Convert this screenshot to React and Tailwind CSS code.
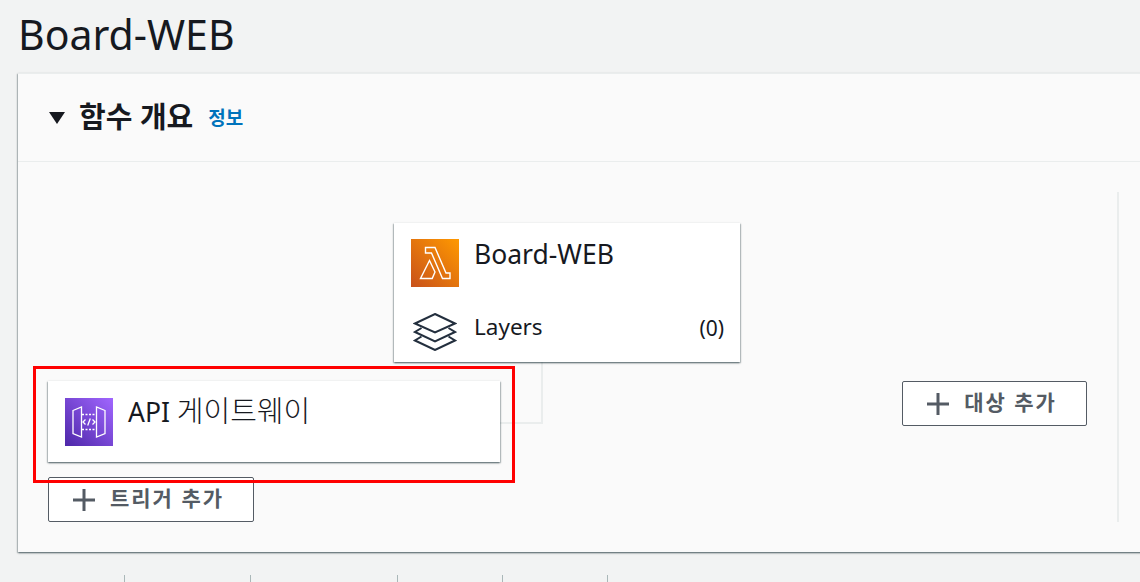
const fuente = { fontFamily: '"Noto Sans", "Noto Sans CJK KR", sans-serif' };

const sombra =
  "shadow-[0_1px_2px_0_rgba(0,28,36,0.5),1px_1px_1px_0_rgba(0,28,36,0.15),-1px_1px_1px_0_rgba(0,28,36,0.15)]";

function LambdaIcon() {
  return (
    <svg width="48" height="48" viewBox="0 0 48 48" className="shrink-0">
      <defs>
        <linearGradient id="naranja" x1="0" y1="1" x2="1" y2="0">
          <stop offset="0" stopColor="#c8511b" />
          <stop offset="1" stopColor="#ff9900" />
        </linearGradient>
      </defs>
      <rect width="48" height="48" fill="url(#naranja)" />
      <path
        d="M14.5 8.5h9.5l11 25.5h4v5.5h-7.5l-11-25.5h-6zM18.5 21.5l5.5 11.5-2.8 6.5H9.5z"
        fill="none"
        stroke="#fff"
        strokeWidth="1.4"
      />
    </svg>
  );
}

function ApiIcon() {
  return (
    <svg width="48" height="48" viewBox="0 0 48 48" className="shrink-0">
      <defs>
        <linearGradient id="morado" x1="0" y1="1" x2="1" y2="0">
          <stop offset="0" stopColor="#4d27a8" />
          <stop offset="1" stopColor="#a166ff" />
        </linearGradient>
      </defs>
      <rect width="48" height="48" fill="url(#morado)" />
      <path d="M8 12.5l8.5-3.5v30l-8.5-3.5zM40 12.5L31.5 9v30l8.5-3.5z" fill="none" stroke="#fff" strokeWidth="1.3" />
      <path d="M17 16.5h14M17 31.5h14" fill="none" stroke="#fff" strokeWidth="1.3" strokeDasharray="2 1.5" />
      <path d="M20.5 21.5L18 24l2.5 2.5M27.5 21.5L30 24l-2.5 2.5M25.3 20.5l-2.6 7" fill="none" stroke="#fff" strokeWidth="1.3" />
    </svg>
  );
}

function LayersIcon() {
  return (
    <svg width="44" height="38" viewBox="0 0 44 38" className="relative top-[6px] shrink-0" fill="none" stroke="#232f3e" strokeWidth="2">
      <path d="M22 1L42 10.5 22 19.5 2 10.5z" />
      <path d="M8.5 15L2 19l20 9.5L42 19l-6.5-4" />
      <path d="M8.5 23.5L2 27.5l20 9.5 20-9.5-6.5-4" />
    </svg>
  );
}

function PlusIcon() {
  return (
    <svg width="22" height="22" viewBox="0 0 22 22" className="shrink-0" fill="none" stroke="#545b64" strokeWidth="3">
      <path d="M0 11h22M11 0v22" />
    </svg>
  );
}

function BotonAgregar({ texto, className }) {
  return (
    <button
      className={`absolute flex h-[45px] items-center justify-center gap-[15px] rounded-[2px] border border-[#545b64] bg-white pr-[5px] text-[21px] font-bold tracking-[2px] text-[#545b64] ${className}`}
    >
      <PlusIcon />
      <span className="relative -top-px">{texto}</span>
    </button>
  );
}

export default function App() {
  return (
    <div className="relative h-[582px] w-[1140px] overflow-hidden bg-[#f2f3f3]" style={fuente}>
      <h1 className="h-[73px] pl-[18px] pt-[6px] text-[41px] leading-[56px] text-[#16191f]">Board-WEB</h1>

      {/* Tarjeta principal */}
      <section className={`ml-[18px] h-[479px] w-[1140px] border-t border-[#eaeded] bg-[#fafafa] ${sombra}`}>
        <header className="flex h-[88px] items-center border-b border-[#eaeded] pl-[31px]">
          <span className="h-0 w-0 border-x-[8px] border-t-[12px] border-x-transparent border-t-[#16191f]" />
          <h2 className="ml-[14px] -mt-[2px] text-[29px] font-bold leading-none text-[#16191f]">함수 개요</h2>
          <a className="ml-[15px] mt-[1px] text-[19px] font-bold text-[#0073bb]">정보</a>
        </header>
      </section>

      {/* Diagrama */}
      <div className="absolute left-[500px] top-[362px] h-[62px] w-[43px] border-b-2 border-r-2 border-[#eaeded]" />

      <div className={`absolute left-[394px] top-[223px] h-[139px] w-[346px] bg-white ${sombra}`}>
        <div className="flex pl-[17px] pt-[16px]">
          <LambdaIcon />
          <span className="ml-[15px] text-[26.5px] leading-[30px] text-[#16191f]">Board-WEB</span>
        </div>
        <div className="mt-[20px] flex items-center pl-[19px] pr-[16px]">
          <LayersIcon />
          <span className="relative top-px ml-[17px] text-[22.5px] leading-[30px] text-[#16191f]">Layers</span>
          <span className="relative top-[2px] ml-auto text-[21px] leading-[30px] text-[#16191f]">(0)</span>
        </div>
      </div>

      <div className={`absolute left-[48px] top-[381px] flex h-[81px] w-[452px] bg-white pl-[17px] pt-[17px] ${sombra}`}>
        <ApiIcon />
        <span className="relative -top-[2px] ml-[15px] text-[26.5px] leading-[30px] text-[#16191f]">
          API <span className="text-[29px] font-light">게이트웨이</span>
        </span>
      </div>

      <BotonAgregar texto="트리거 추가" className="left-[48px] top-[477px] w-[206px]" />
      <BotonAgregar texto="대상 추가" className="left-[902px] top-[381px] w-[185px]" />

      <div className="absolute left-[1117px] top-[192px] h-[330px] w-[2px] bg-[#eaeded]" />

      {/* Resaltado rojo */}
      <div className="absolute left-[33px] top-[366px] h-[117px] w-[482px] border-[3px] border-[#ff0000]" />

      {/* Separadores de pestañas */}
      <div className="absolute left-0 top-[575px] flex h-[7px] w-full pl-[124px]">
        <span className="w-[126px] border-l border-[#aab7b8]" />
        <span className="w-[147px] border-l border-[#aab7b8]" />
        <span className="w-[105px] border-l border-[#aab7b8]" />
        <span className="w-[105px] border-l border-[#aab7b8]" />
        <span className="w-[105px] border-l border-[#aab7b8]" />
      </div>
    </div>
  );
}
